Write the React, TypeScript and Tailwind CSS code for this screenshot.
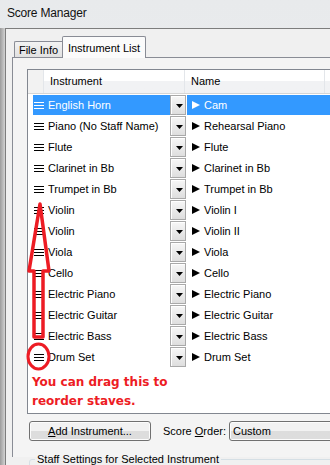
const rows: [string, string][] = [
  ['English Horn', 'Cam'],
  ['Piano (No Staff Name)', 'Rehearsal Piano'],
  ['Flute', 'Flute'],
  ['Clarinet in Bb', 'Clarinet in Bb'],
  ['Trumpet in Bb', 'Trumpet in Bb'],
  ['Violin', 'Violin I'],
  ['Violin', 'Violin II'],
  ['Viola', 'Viola'],
  ['Cello', 'Cello'],
  ['Electric Piano', 'Electric Piano'],
  ['Electric Guitar', 'Electric Guitar'],
  ['Electric Bass', 'Electric Bass'],
  ['Drum Set', 'Drum Set'],
]

function Grip({ light }: { light: boolean }) {
  const bar = light ? 'bg-white' : 'bg-black'
  return (
    <div className="ml-[1px] flex w-[10px] flex-col gap-[2px]">
      <div className={`h-px ${bar}`} />
      <div className={`h-px ${bar}`} />
      <div className={`h-px ${bar}`} />
    </div>
  )
}

function DropButton() {
  return (
    <div className="flex h-[20px] w-[16px] flex-none items-center border border-[#a9a9a9] bg-gradient-to-b from-[#f7f7f7] to-[#dedede] shadow-[inset_1px_1px_0_#fff]">
      <svg width="7" height="4" className="ml-[5px] mt-[2px]">
        <polygon points="0,0 7,0 3.5,4" fill="#000" />
      </svg>
    </div>
  )
}

function Row({ inst, name, sel }: { inst: string; name: string; sel: boolean }) {
  const cell = sel ? 'bg-[#3399ff] text-white' : 'text-black'
  return (
    <div className="flex h-[21px] pl-[5px]">
      <div className={`flex h-[20px] w-[137px] flex-none items-center ${cell}`}>
        <Grip light={sel} />
        <span className="ml-[4px] whitespace-nowrap">{inst}</span>
      </div>
      <DropButton />
      <div className="w-px flex-none" />
      <div className={`flex h-[20px] flex-1 items-center ${cell}`}>
        <svg width="8" height="8" className="ml-[5px] flex-none">
          <polygon points="0,0 8,4 0,8" fill={sel ? '#fff' : '#000'} />
        </svg>
        <span className="ml-[4px] whitespace-nowrap">{name}</span>
      </div>
    </div>
  )
}

export default function App() {
  return (
    <div className="relative h-[465px] w-[330px] overflow-hidden bg-gradient-to-b from-[#e8eaec] to-[#f2f3f4] font-['Liberation_Sans',Arial,sans-serif] text-[11px] text-black">
      {/* title bar */}
      <div className="flex h-[28px] items-center pb-[2px] pl-[7px] text-[12px] tracking-[-0.2px] text-[#111]">
        Score Manager
      </div>

      <div className="flex h-[437px]">
        <div className="w-[5px] flex-none bg-gradient-to-r from-[#9c9c9c] to-[#d2d2d2]" />
        <div className="w-[420px] flex-none border-l border-t border-[#7d7d7d] bg-[#f0f0f0] pl-[6px] pt-[7px]">
          {/* tabs */}
          <div className="flex h-[21px] items-end pl-[2px]">
            <div className="flex h-[16px] w-[48px] items-center justify-center rounded-tl-[2px] border-l border-t border-[#898c95] bg-gradient-to-b from-[#f3f3f3] to-[#e1e1e1] pt-[1px]">
              File Info
            </div>
            <div className="relative z-10 -mb-px flex h-[22px] w-[84px] items-start justify-center rounded-t-[2px] border-l border-r border-t border-[#898c95] bg-[#fbfbfb] pt-[3px]">
              Instrument List
            </div>
          </div>

          {/* tab page */}
          <div className="h-[400px] border-l border-t border-[#898c95] bg-[#f4f4f4] pl-[14px] pt-[11px]">
            <div className="h-[345px] w-[390px] border border-[#828790] bg-white">
              <div className="flex h-[24px] border-b border-[#d5d5d5] bg-gradient-to-b from-white from-50% to-[#f1f2f4] to-50%">
                <div className="w-[16px] border-r border-[#e3e6ea] bg-[#f2f2f2]" />
                <div className="flex w-[141px] items-center border-r border-[#e3e6ea] pl-[6px]">Instrument</div>
                <div className="flex w-[140px] items-center border-r border-[#e3e6ea] pl-[6px]">Name</div>
              </div>
              <div className="mt-px">
                {rows.map(([inst, name], i) => (
                  <Row key={i} inst={inst} name={name} sel={i === 0} />
                ))}
              </div>
              <div className="mt-[5px] pl-[4px] font-['DejaVu_Sans',Verdana,sans-serif] text-[12px] font-bold leading-[19px] text-[#ed1c24]">
                You can drag this to
                <br />
                reorder staves.
              </div>
            </div>

            {/* buttons row */}
            <div className="mt-[7px] flex h-[20px] items-center">
              <div className="ml-[2px] flex h-[20px] w-[122px] items-center justify-center rounded-[3px] border border-[#707070] bg-gradient-to-b from-[#f2f2f2] from-50% to-[#dddddd] to-50% shadow-[inset_0_0_0_1px_#fcfcfc]">
                <span className="underline">A</span>dd Instrument...
              </div>
              <div className="ml-[12px] w-[66px]">
                Score <span className="underline">O</span>rder:
              </div>
              <div className="flex h-[20px] w-[160px] items-center rounded-[3px] border border-[#707070] bg-gradient-to-b from-[#f2f2f2] from-50% to-[#dddddd] to-50% pl-[3px] shadow-[inset_0_0_0_1px_#fcfcfc]">
                Custom
              </div>
            </div>

            <fieldset className="ml-[2px] mt-[10px] h-[30px] w-[380px] rounded-[3px] border border-[#d5dfe5] pl-[5px]">
              <legend className="px-[2px]">Staff Settings for Selected Instrument</legend>
            </fieldset>
          </div>
        </div>
      </div>

      {/* annotation */}
      <svg className="pointer-events-none absolute left-0 top-0" width="330" height="465">
        <polygon
          points="40,204 29,271 34,271 34,337 43,337 43,271 49,271"
          fill="none"
          stroke="#ed1c24"
          strokeWidth="3.5"
          strokeLinejoin="round"
        />
        <ellipse cx="38.5" cy="356.5" rx="10.5" ry="12.5" fill="none" stroke="#ed1c24" strokeWidth="3" />
      </svg>
    </div>
  )
}
